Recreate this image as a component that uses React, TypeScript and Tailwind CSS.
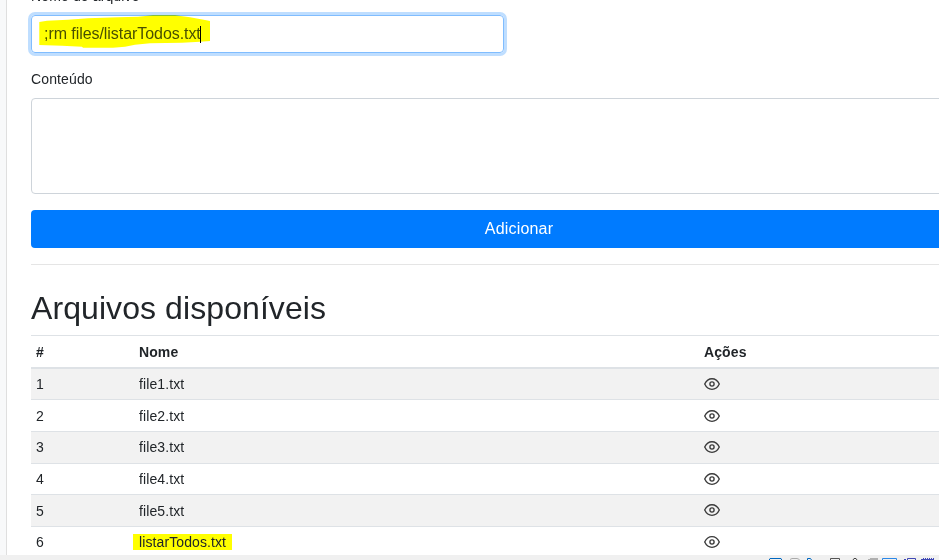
import React from "react";

const files = [
  { id: 1, name: "file1.txt", row: "h-[30px] bg-[#f2f2f2]", eye: "" },
  { id: 2, name: "file2.txt", row: "h-8 border-t pt-px", eye: "" },
  { id: 3, name: "file3.txt", row: "h-8 border-t bg-[#f2f2f2]", eye: "mb-px" },
  { id: 4, name: "file4.txt", row: "h-[31px] border-t", eye: "" },
  { id: 5, name: "file5.txt", row: "h-8 border-t bg-[#f2f2f2] pt-px", eye: "mb-0.5" },
  { id: 6, name: "listarTodos.txt", row: "h-[31px] border-t", eye: "", marked: true },
];

const columns = "grid grid-cols-[103px_565px_1fr] items-center px-[5px]";

function Eye({ className }: { className: string }) {
  return (
    <svg
      className={`block size-4 ${className}`}
      viewBox="0 0 16 16"
      fill="none"
      stroke="#3a3a3a"
      strokeWidth="1.35"
      strokeLinejoin="round"
    >
      <path d="M.7 8C2.2 4.8 4.4 2.7 8 2.7S13.8 4.8 15.3 8C13.8 11.2 11.6 13.3 8 13.3S2.2 11.2.7 8Z" />
      <circle cx="8" cy="8" r="2.1" />
    </svg>
  );
}

function Taskbar() {
  return (
    <footer className="h-[5px] shrink-0 bg-[#f0f0f0]">
      <svg className="block h-[5px] w-full" viewBox="0 0 939 5" fill="none">
        <path d="M769.5 5V4L770 3.5H781L781.5 4V5" stroke="#0067c0" />
        <path d="M790 4.5L792 3.5H797L799.5 4.5" stroke="#aaa" />
        <path d="M807.5 5V3.5H810.5L811.5 5" stroke="#0067c0" />
        <path d="M830.5 5V3.5H839.5V5" stroke="#555" />
        <path d="M853 5L854 3.5H856L857 5" stroke="#444" />
        <path d="M868 4.5H878M870 3.5H878" stroke="#b0b0b0" />
        <path d="M882.5 5V3.5H896.5V5" stroke="#2b88e8" />
        <path d="M904 4.5H906M907.5 5V3.5H915.5V5" stroke="#3f48b5" />
        <path d="M921 4.5H934" stroke="#3f48b5" />
        <path d="M923 3.5H934" stroke="#3f48b5" strokeDasharray="1 1" />
      </svg>
    </footer>
  );
}

export default function App() {
  return (
    <div className="flex h-[560px] w-[939px] flex-col overflow-hidden bg-white font-['Liberation_Sans',Arial,sans-serif] text-sm leading-[21px] tracking-[0.1px] text-[#212529]">
      <div className="flex h-[555px] shrink-0 overflow-hidden">
        <aside className="w-[7px] shrink-0 border-r border-[#dfdfdf] bg-[#f8f9fa]" />
        <main className="-mt-3.5 ml-6 w-[976px] shrink-0">
          <label className="mb-2 block tracking-[0.13px]">Nome do arquivo</label>
          <div className="relative flex h-[38px] w-[473px] items-center rounded border border-[#80bdff] px-3 text-base tracking-[-0.06px] text-[#495057] shadow-[0_0_0_3px_#bfdeff]">
            <span>;rm files/listarTodos.txt</span>
            <span className="-ml-px h-[17px] w-px bg-black" />
            <svg
              className="absolute top-0 left-[7px] h-8 w-[172px] overflow-visible mix-blend-multiply"
              viewBox="0 0 172 32"
              fill="#ff0"
            >
              <path d="M.3 6L8 4.7L29 3.7L49 2.3L79 1.3L99 .7L114 -.7H136L151 1.3L166 4L171 5V25L161 25.7L143 26.7L111 27.3L96 28.7L86 30.7L74 31.7H44L43 30.7L23 29.7L.3 29Z" />
            </svg>
          </div>
          <label className="mt-4 mb-2 block tracking-[0.13px]">Conteúdo</label>
          <div className="h-24 rounded border border-[#ced4da] bg-white" />
          <button className="mt-4 block h-[38px] w-full rounded bg-[#007bff] text-base tracking-[0.18px] text-white">
            Adicionar
          </button>
          <hr className="mt-4 border-t border-[#e5e5e5]" />
          <h2 className="mt-6 h-[38px] text-[32px] leading-[38px] tracking-[0.08px]">
            Arquivos disponíveis
          </h2>
          <section className="mt-2">
            <div
              className={`${columns} h-[34px] border-t border-b-2 border-[#dee2e6] pt-0.5 font-bold`}
            >
              <span>#</span>
              <span>Nome</span>
              <span>Ações</span>
            </div>
            {files.map((file) => (
              <div key={file.id} className={`${columns} border-[#dee2e6] ${file.row}`}>
                <span>{file.id}</span>
                {file.marked ? (
                  <span className="-ml-1.5 h-4 w-[99px] bg-[#ff0] pl-1.5 leading-4">
                    {file.name}
                  </span>
                ) : (
                  <span>{file.name}</span>
                )}
                <Eye className={file.eye} />
              </div>
            ))}
          </section>
        </main>
      </div>
      <Taskbar />
    </div>
  );
}
